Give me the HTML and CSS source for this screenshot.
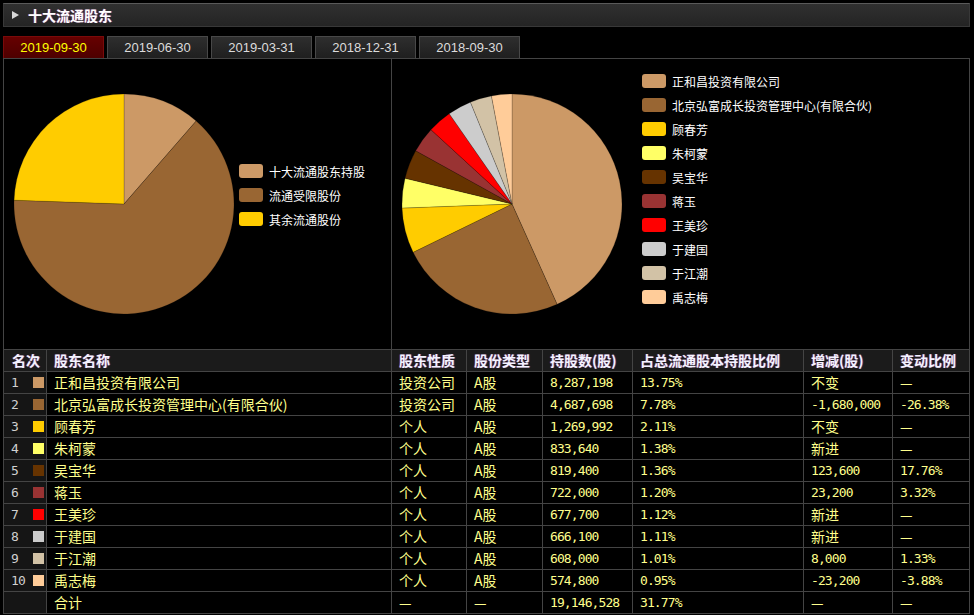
FILE: index.html
```html
<!DOCTYPE html>
<html lang="zh-CN">
<head>
<meta charset="utf-8">
<title>十大流通股东</title>
<link rel="stylesheet" href="styles.css">
</head>
<body>
<div class="wrap">
  <div class="titlebar"><span class="tri"></span><span class="title">十大流通股东</span></div>
  <div class="tabs">
    <div class="tab active">2019-09-30</div>
    <div class="tab">2019-06-30</div>
    <div class="tab">2019-03-31</div>
    <div class="tab">2018-12-31</div>
    <div class="tab">2018-09-30</div>
  </div>
  <div class="panel">
    <div class="charts">
      <div class="chart chart-left">
        <svg class="pie" width="222" height="222" viewBox="0 0 222 222">
          <path fill="#CC9966" d="M111 111 L111 1 A110 110 0 0 1 183.17 27.98 Z"/>
          <path fill="#996633" d="M111 111 L183.17 27.98 A110 110 0 1 1 1.07 107.16 Z"/>
          <path fill="#FFCC00" d="M111 111 L1.07 107.16 A110 110 0 0 1 111 1 Z"/>
        </svg>
        <ul class="legend legend-left">
          <li><i class="sw c1"></i>十大流通股东持股</li>
          <li><i class="sw c2"></i>流通受限股份</li>
          <li><i class="sw c3"></i>其余流通股份</li>
        </ul>
      </div>
      <div class="chart chart-right">
        <svg class="pie" width="222" height="222" viewBox="0 0 222 222">
          <path fill="#CC9966" d="M111 111 L111 1 A110 110 0 0 1 156.08 211.34 Z"/>
          <path fill="#996633" d="M111 111 L156.08 211.34 A110 110 0 0 1 12.15 159.28 Z"/>
          <path fill="#FFCC00" d="M111 111 L12.15 159.28 A110 110 0 0 1 1.07 115.07 Z"/>
          <path fill="#FFFF66" d="M111 111 L1.07 115.07 A110 110 0 0 1 4.05 85.28 Z"/>
          <path fill="#663300" d="M111 111 L4.05 85.28 A110 110 0 0 1 14.73 57.80 Z"/>
          <path fill="#993333" d="M111 111 L14.73 57.80 A110 110 0 0 1 29.93 36.65 Z"/>
          <path fill="#FF0000" d="M111 111 L29.93 36.65 A110 110 0 0 1 48.26 20.65 Z"/>
          <path fill="#CCCCCC" d="M111 111 L48.26 20.65 A110 110 0 0 1 69.44 9.15 Z"/>
          <path fill="#D2C2A6" d="M111 111 L69.44 9.15 A110 110 0 0 1 90.46 2.93 Z"/>
          <path fill="#FFCC99" d="M111 111 L90.46 2.93 A110 110 0 0 1 111 1 Z"/>
        </svg>
        <ul class="legend legend-right">
          <li><i class="sw c1"></i>正和昌投资有限公司</li>
          <li><i class="sw c2"></i>北京弘富成长投资管理中心(有限合伙)</li>
          <li><i class="sw c3"></i>顾春芳</li>
          <li><i class="sw c4"></i>朱柯蒙</li>
          <li><i class="sw c5"></i>吴宝华</li>
          <li><i class="sw c6"></i>蒋玉</li>
          <li><i class="sw c7"></i>王美珍</li>
          <li><i class="sw c8"></i>于建国</li>
          <li><i class="sw c9"></i>于江潮</li>
          <li><i class="sw c10"></i>禹志梅</li>
        </ul>
      </div>
    </div>
    <div class="grid">
      <div class="row head">
        <div class="cell first">名次</div><div class="cell">股东名称</div><div class="cell">股东性质</div><div class="cell">股份类型</div><div class="cell">持股数(股)</div><div class="cell">占总流通股本持股比例</div><div class="cell">增减(股)</div><div class="cell">变动比例</div>
      </div>
      <div class="row">
        <div class="cell first"><span class="rank">1</span><i class="dot c1"></i></div><div class="cell">正和昌投资有限公司</div><div class="cell">投资公司</div><div class="cell">A股</div><div class="cell num">8,287,198</div><div class="cell num">13.75%</div><div class="cell">不变</div><div class="cell">—</div>
      </div>
      <div class="row">
        <div class="cell first"><span class="rank">2</span><i class="dot c2"></i></div><div class="cell">北京弘富成长投资管理中心(有限合伙)</div><div class="cell">投资公司</div><div class="cell">A股</div><div class="cell num">4,687,698</div><div class="cell num">7.78%</div><div class="cell num">-1,680,000</div><div class="cell num">-26.38%</div>
      </div>
      <div class="row">
        <div class="cell first"><span class="rank">3</span><i class="dot c3"></i></div><div class="cell">顾春芳</div><div class="cell">个人</div><div class="cell">A股</div><div class="cell num">1,269,992</div><div class="cell num">2.11%</div><div class="cell">不变</div><div class="cell">—</div>
      </div>
      <div class="row">
        <div class="cell first"><span class="rank">4</span><i class="dot c4"></i></div><div class="cell">朱柯蒙</div><div class="cell">个人</div><div class="cell">A股</div><div class="cell num">833,640</div><div class="cell num">1.38%</div><div class="cell">新进</div><div class="cell">—</div>
      </div>
      <div class="row">
        <div class="cell first"><span class="rank">5</span><i class="dot c5"></i></div><div class="cell">吴宝华</div><div class="cell">个人</div><div class="cell">A股</div><div class="cell num">819,400</div><div class="cell num">1.36%</div><div class="cell num">123,600</div><div class="cell num">17.76%</div>
      </div>
      <div class="row">
        <div class="cell first"><span class="rank">6</span><i class="dot c6"></i></div><div class="cell">蒋玉</div><div class="cell">个人</div><div class="cell">A股</div><div class="cell num">722,000</div><div class="cell num">1.20%</div><div class="cell num">23,200</div><div class="cell num">3.32%</div>
      </div>
      <div class="row">
        <div class="cell first"><span class="rank">7</span><i class="dot c7"></i></div><div class="cell">王美珍</div><div class="cell">个人</div><div class="cell">A股</div><div class="cell num">677,700</div><div class="cell num">1.12%</div><div class="cell">新进</div><div class="cell">—</div>
      </div>
      <div class="row">
        <div class="cell first"><span class="rank">8</span><i class="dot c8"></i></div><div class="cell">于建国</div><div class="cell">个人</div><div class="cell">A股</div><div class="cell num">666,100</div><div class="cell num">1.11%</div><div class="cell">新进</div><div class="cell">—</div>
      </div>
      <div class="row">
        <div class="cell first"><span class="rank">9</span><i class="dot c9"></i></div><div class="cell">于江潮</div><div class="cell">个人</div><div class="cell">A股</div><div class="cell num">608,000</div><div class="cell num">1.01%</div><div class="cell num">8,000</div><div class="cell num">1.33%</div>
      </div>
      <div class="row">
        <div class="cell first"><span class="rank">10</span><i class="dot c10"></i></div><div class="cell">禹志梅</div><div class="cell">个人</div><div class="cell">A股</div><div class="cell num">574,800</div><div class="cell num">0.95%</div><div class="cell num">-23,200</div><div class="cell num">-3.88%</div>
      </div>
      <div class="row">
        <div class="cell first"></div><div class="cell">合计</div><div class="cell">—</div><div class="cell">—</div><div class="cell num">19,146,528</div><div class="cell num">31.77%</div><div class="cell">—</div><div class="cell">—</div>
      </div>
    </div>
  </div>
</div>
</body>
</html>
```

FILE: styles.css
```css
* { box-sizing: border-box; }
html, body { margin: 0; padding: 0; background: #000; }
body {
  padding: 3px;
  font-family: "Noto Sans CJK SC", "Noto Sans", sans-serif;
  color: #fff;
}
.wrap { width: 967px; }

.titlebar {
  height: 24px;
  display: flex;
  align-items: center;
  background: linear-gradient(#303030, #242424);
  border: 1px solid #383838;
  border-top-color: #5a5a5a;
  padding-left: 8px;
}
.tri {
  width: 0; height: 0;
  border-left: 7px solid #d8d8d8;
  border-top: 4.5px solid transparent;
  border-bottom: 4.5px solid transparent;
  margin-right: 9px;
}
.title {
  font-size: 14px;
  font-weight: bold;
  line-height: 16px;
  color: #fff;
  text-shadow: -1px 0 rgba(255, 60, 60, 0.35), 1px 0 rgba(90, 90, 255, 0.45);
}

.tabs {
  display: flex;
  margin-top: 9px;
  height: 22px;
}
.tab {
  width: 101px;
  height: 22px;
  margin-right: 3px;
  border: 1px solid #484848;
  border-bottom: none;
  background: linear-gradient(#2e2e2e, #1f1f1f);
  color: #dcdcdc;
  font-family: "Liberation Sans", sans-serif;
  font-size: 13px;
  line-height: 21px;
  text-align: center;
}
.tab.active {
  background: linear-gradient(#660000, #4e0000);
  border-color: #7a0a0a;
  color: #ffff00;
}

.panel {
  border: 1px solid #444;
}
.charts {
  display: grid;
  grid-template-columns: 387px 578px;
  height: 290px;
}
.chart { display: flex; align-items: flex-start; }
.chart-right { border-left: 1px solid #444; }
.pie { display: block; margin: 34px 0 0 9px; flex: none; }
.pie path { stroke: rgba(0, 0, 0, 0.3); stroke-width: 0.6; }

.legend {
  list-style: none;
  margin: 0;
  padding: 0;
  font-size: 12px;
  color: #fff;
}
.legend li {
  height: 24px;
  display: flex;
  align-items: center;
  white-space: nowrap;
}
.legend-left { margin: 100px 0 0 4px; }
.legend-right { margin: 10px 0 0 19px; }
.sw {
  display: block;
  width: 24px;
  height: 14px;
  border-radius: 3px;
  margin-right: 6px;
  flex: none;
}

.c1 { background: #CC9966; }
.c2 { background: #996633; }
.c3 { background: #FFCC00; }
.c4 { background: #FFFF66; }
.c5 { background: #663300; }
.c6 { background: #993333; }
.c7 { background: #FF0000; }
.c8 { background: #CCCCCC; }
.c9 { background: #D2C2A6; }
.c10 { background: #FFCC99; }

.row {
  display: grid;
  grid-template-columns: 42px 345px 75px 76px 90px 171px 89px 77px;
  height: 22px;
  border-top: 1px solid #444;
  color: #ffff8c;
  font-size: 14px;
}
.cell {
  display: flex;
  align-items: center;
  padding-left: 7px;
  border-left: 1px solid #444;
  white-space: nowrap;
  overflow: hidden;
  line-height: 21px;
}
.cell.first {
  border-left: none;
  background: #151515;
  padding-left: 7px;
}
.row.head {
  background: #1b1b1b;
  color: #f4f4ff;
  font-weight: bold;
  text-shadow: -1px 0 rgba(255, 60, 60, 0.3), 1px 0 rgba(90, 90, 255, 0.4);
}
.row.head .cell.first { padding-left: 8px; background: #1b1b1b; }
.num {
  font-family: "DejaVu Sans Mono", "Liberation Mono", monospace;
  font-size: 13px;
  letter-spacing: -0.9px;
}
.rank {
  width: 22px;
  color: #d0d0d0;
  font-family: "DejaVu Sans Mono", monospace;
  font-size: 13px;
  letter-spacing: -0.9px;
}
.dot {
  display: block;
  width: 11px;
  height: 11px;
}
```
